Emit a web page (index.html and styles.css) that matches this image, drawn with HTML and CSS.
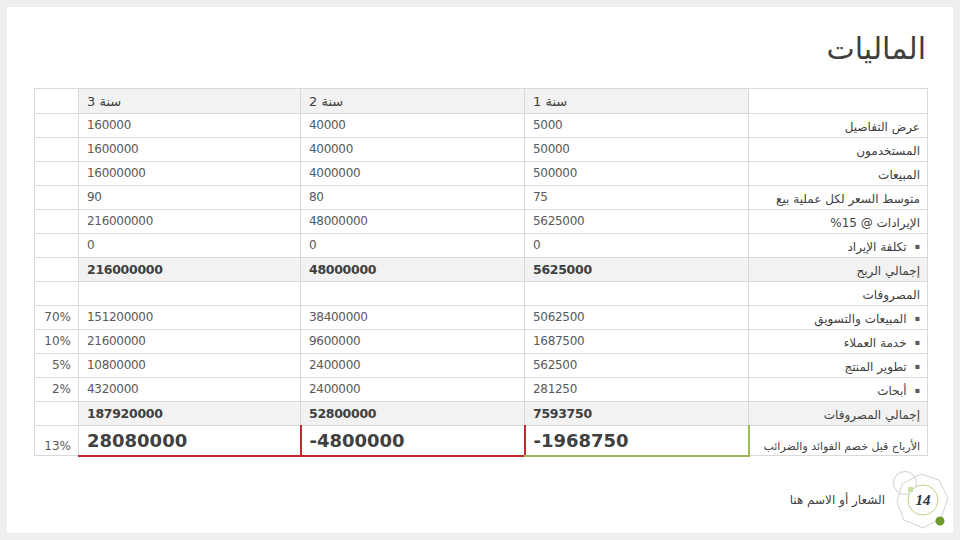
FILE: index.html
```html
<!DOCTYPE html>
<html lang="ar">
<head>
<meta charset="utf-8">
<link rel="stylesheet" href="styles.css">
</head>
<body>
<div class="slide">
  <h1 class="title" dir="rtl">الماليات</h1>
  <table class="fin" dir="rtl">
    <colgroup>
      <col class="c-label"><col class="c-num"><col class="c-num"><col class="c-num3"><col class="c-pct">
    </colgroup>
    <tr class="head">
      <td class="label blank"></td><td class="hd">سنة 1</td><td class="hd">سنة 2</td><td class="hd">سنة 3</td><td class="pct blank"></td>
    </tr>
    <tr><td class="label">عرض التفاصيل</td><td class="num">5000</td><td class="num">40000</td><td class="num">160000</td><td class="pct"></td></tr>
    <tr><td class="label">المستخدمون</td><td class="num">50000</td><td class="num">400000</td><td class="num">1600000</td><td class="pct"></td></tr>
    <tr><td class="label">المبيعات</td><td class="num">500000</td><td class="num">4000000</td><td class="num">16000000</td><td class="pct"></td></tr>
    <tr><td class="label">متوسط السعر لكل عملية بيع</td><td class="num">75</td><td class="num">80</td><td class="num">90</td><td class="pct"></td></tr>
    <tr><td class="label">الإيرادات @ 15%</td><td class="num">5625000</td><td class="num">48000000</td><td class="num">216000000</td><td class="pct"></td></tr>
    <tr><td class="label"><span class="bullet">▪</span>تكلفة الإيراد</td><td class="num">0</td><td class="num">0</td><td class="num">0</td><td class="pct"></td></tr>
    <tr class="total"><td class="label">إجمالي الربح</td><td class="num strong">5625000</td><td class="num strong">48000000</td><td class="num strong">216000000</td><td class="pct plain"></td></tr>
    <tr><td class="label">المصروفات</td><td class="num"></td><td class="num"></td><td class="num"></td><td class="pct"></td></tr>
    <tr><td class="label"><span class="bullet">▪</span>المبيعات والتسويق</td><td class="num">5062500</td><td class="num">38400000</td><td class="num">151200000</td><td class="pct">70%</td></tr>
    <tr><td class="label"><span class="bullet">▪</span>خدمة العملاء</td><td class="num">1687500</td><td class="num">9600000</td><td class="num">21600000</td><td class="pct">10%</td></tr>
    <tr><td class="label"><span class="bullet">▪</span>تطوير المنتج</td><td class="num">562500</td><td class="num">2400000</td><td class="num">10800000</td><td class="pct">5%</td></tr>
    <tr><td class="label"><span class="bullet">▪</span>أبحاث</td><td class="num">281250</td><td class="num">2400000</td><td class="num">4320000</td><td class="pct">2%</td></tr>
    <tr class="total"><td class="label">إجمالي المصروفات</td><td class="num strong">7593750</td><td class="num strong">52800000</td><td class="num strong">187920000</td><td class="pct plain"></td></tr>
    <tr class="final"><td class="label">الأرباح قبل خصم الفوائد والضرائب</td><td class="num big pos">-1968750</td><td class="num big neg">-4800000</td><td class="num big neg">28080000</td><td class="pct">13%</td></tr>
  </table>
  <div class="footer" dir="rtl">
    <div class="badge">
      <svg width="60" height="60" viewBox="0 0 60 60">
        <polygon points="28,4 46,10 55,28 48,48 30,58 11,50 4,32 9,14" fill="none" stroke="#d2d2d2" stroke-width="1"/>
        <circle cx="12" cy="13" r="11.5" fill="none" stroke="#cfcfcf" stroke-width="1"/>
        <circle cx="30" cy="30" r="15" fill="#fff" stroke="#b9d18c" stroke-width="1"/>
        <rect x="15" y="17" width="5" height="5" fill="#c9dea2"/>
        <circle cx="47" cy="51" r="4.5" fill="#6f9a2e"/>
      </svg>
      <span class="pg">14</span>
    </div>
    <span class="brand">الشعار أو الاسم هنا</span>
  </div>
</div>
</body>
</html>
```
FILE: styles.css
```css
html, body {
  margin: 0;
  padding: 0;
  background: #efefef;
}
body {
  padding: 7px;
  font-family: "DejaVu Sans", "Noto Sans", sans-serif;
}
.slide {
  width: 946px;
  height: 526px;
  background: #ffffff;
  box-sizing: border-box;
  padding: 23px 26px 0 27px;
  display: flex;
  flex-direction: column;
  overflow: hidden;
}
.title {
  margin: 0;
  font-weight: normal;
  font-size: 30px;
  line-height: 38px;
  color: #3f3f3f;
  text-align: right;
  padding-right: 1px;
}
.fin {
  margin-top: 20px;
  border-collapse: collapse;
  width: 893px;
  table-layout: fixed;
  color: #595959;
}
.c-label { width: 179px; }
.c-num { width: 224px; }
.c-num3 { width: 222px; }
.c-pct { width: 44px; }
.fin td {
  border: 1px solid #d9d9d9;
  height: 24px;
  line-height: 15px;
  padding: 0;
  white-space: nowrap;
  box-sizing: border-box;
}
.fin tr.head td { height: 25px; }
.label {
  text-align: right;
  padding-right: 7px !important;
  font-size: 12px;
  padding-top: 4px !important;
  vertical-align: middle;
  color: #404040;
}
.num {
  text-align: left;
  direction: ltr;
  padding-left: 8px !important;
  font-size: 12px;
  letter-spacing: -0.3px;
}
.pct {
  text-align: right;
  direction: ltr;
  padding-right: 7px !important;
  font-size: 12px;
}
.hd {
  background: #f2f2f2;
  text-align: left;
  padding-left: 8px !important;
  font-size: 13px;
  color: #404040;
}
.bullet {
  font-size: 8px;
  margin-left: 8px;
  color: #595959;
  position: relative;
  top: -2px;
}
.total td { background: #f2f2f2; }
.total td.plain { background: #ffffff; }
.strong {
  font-weight: bold;
  font-size: 12.5px;
  color: #404040;
}
.fin .final td { height: 30px; }
.fin .final .label { vertical-align: bottom; padding-bottom: 1px; font-size: 11px; }
.fin .final .pct { vertical-align: bottom; padding-bottom: 1px; }
.big {
  font-weight: bold;
  font-size: 18px;
  line-height: 22px !important;
  color: #404040;
  letter-spacing: 0;
  padding-top: 1px !important;
}
.fin td.neg {
  border-right: 2px solid #c0282d;
  border-bottom: 2px solid #c0282d;
}
.fin td.pos {
  border-right: 2px solid #9bbb59;
  border-bottom: 2px solid #9bbb59;
}
.footer {
  margin-top: 13px;
  display: flex;
  align-items: center;
  gap: 8px;
  margin-right: -26px;
}
.badge {
  position: relative;
  width: 60px;
  height: 60px;
}
.badge svg { display: block; }
.pg {
  position: absolute;
  left: 0;
  top: 0;
  width: 60px;
  line-height: 60px;
  text-align: center;
  font-family: "Liberation Serif", "DejaVu Serif", serif;
  font-style: italic;
  font-weight: bold;
  font-size: 15px;
  color: #333333;
}
.brand {
  font-size: 12px;
  color: #404040;
}
```
